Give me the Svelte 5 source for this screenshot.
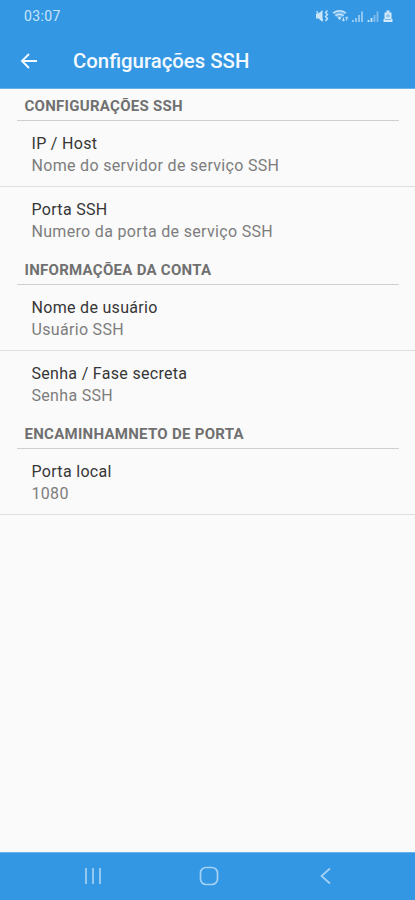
<script>
  const sections = [
    {
      title: 'CONFIGURAÇÕES SSH',
      rows: [
        { label: 'IP / Host', value: 'Nome do servidor de serviço SSH' },
        { label: 'Porta SSH', value: 'Numero da porta de serviço SSH' }
      ]
    },
    {
      title: 'INFORMAÇÕEA DA CONTA',
      rows: [
        { label: 'Nome de usuário', value: 'Usuário SSH' },
        { label: 'Senha / Fase secreta', value: 'Senha SSH' }
      ]
    },
    {
      title: 'ENCAMINHAMNETO DE PORTA',
      rows: [{ label: 'Porta local', value: '1080' }]
    }
  ];
</script>

<div class="screen">
  <div class="status">
    <span class="time">03:07</span>
    <svg class="indicators" width="80" height="16" viewBox="0 0 80 16" fill="none" aria-hidden="true">
      <path d="M1 5.500h2.500L7.500 2v12l-4-3.500H1z" fill="#c9e5f9" />
      <path d="M1.500 3l6.500 9.500" stroke="#c9e5f9" stroke-width="1.200" />
      <path d="M12.500 2.500l-2 2 2 2-2 2 2 2-2 2.500" stroke="#c9e5f9" stroke-width="1.400" />
      <path d="M18 5q6.500-4.500 13 0l-6.500 6.500z" fill="#6db5ec" />
      <path d="M18 5q6.500-4.500 13 0M20.500 7.800q4-3 8 0" stroke="#c9e5f9" stroke-width="1.500" />
      <path d="M22.500 9.700q2-1.500 4 0l-2 2.300z" fill="#c9e5f9" />
      <path d="M28.500 13V9.500M27 11.500l1.500 1.700 1.500-1.700M31.700 9v3.500M30.300 10.300l1.400-1.500 1.400 1.500" stroke="#c9e5f9" />
      <path d="M38 14v-2M41 14v-4M44 14V7M47 14V3.500" stroke="#98cbf1" stroke-width="1.800" />
      <path d="M53.500 14v-2M56.500 14v-4" stroke="#c9e5f9" stroke-width="1.800" />
      <path d="M59.500 14V7M62.500 14V3.500" stroke="#83bfee" stroke-width="1.800" />
      <path d="M69.500 4.500h2V2.500h3v2h2V11h1v3h-9v-3h1z" fill="#d2e9fa" />
      <path d="M73 5.500v4M71 8h4M70 11.500h6" stroke="#74b8ec" />
    </svg>
  </div>
  <header>
    <svg width="18" height="18" viewBox="0 0 18 18" fill="none" stroke="#f3faff" stroke-width="1.900" aria-hidden="true">
      <path d="M17 9H2.500M9 2L2 9l7 7" />
    </svg>
    <h1>Configurações SSH</h1>
  </header>

  <main>
    {#each sections as section}
      <section>
        <h2>{section.title}</h2>
        {#each section.rows as row, i}
          <div class="row" class:divided={i === 0}>
            <div class="label">{row.label}</div>
            <div class="value">{row.value}</div>
          </div>
        {/each}
      </section>
    {/each}
  </main>

  <nav>
    <svg width="18" height="18" viewBox="0 0 18 18" aria-hidden="true">
      <path d="M2 1v16M9 1v16M16 1v16" />
    </svg>
    <svg width="20" height="20" viewBox="0 0 20 20" aria-hidden="true">
      <rect x="1.500" y="1.500" width="17" height="17" rx="5.500" />
    </svg>
    <svg width="18" height="18" viewBox="0 0 18 18" aria-hidden="true">
      <path d="M14 1.500L5.500 9l8.500 7.500" />
    </svg>
  </nav>
</div>

<style>
  :global(body) { margin: 0; background: #fafafa; }
  .screen {
    box-sizing: border-box;
    width: 415px;
    height: 900px;
    display: flex;
    flex-direction: column;
    background: #fafafa;
    font-family: Roboto, "Liberation Sans", sans-serif;
    overflow: hidden;
  }
  .status {
    height: 33px;
    flex: none;
    box-sizing: border-box;
    padding: 0 20px 2px 24px;
    display: flex;
    align-items: center;
    justify-content: space-between;
    background: #3397e3;
  }
  .time { color: #c9e5f9; font-size: 14px; letter-spacing: 0.4px; }
  .indicators { display: block; }
  header {
    height: 56px;
    flex: none;
    box-sizing: border-box;
    padding: 0 20px;
    display: flex;
    align-items: center;
    gap: 35px;
    background: #3397e3;
    border-bottom: 1px solid #67b1ea;
  }
  h1 { margin: 0; color: #f3faff; font-size: 20.35px; font-weight: 500; line-height: 24px; }
  main { flex: 1; }
  h2 {
    margin: 0 16px 0 17px;
    height: 32px;
    box-sizing: border-box;
    padding: 7px 0 0 7.500px;
    border-bottom: 1px solid #cfcfcf;
    color: #707070;
    font-size: 15px;
    line-height: 20px;
    font-weight: 700;
    letter-spacing: 0.28px;
  }
  section + section h2 { height: 33px; padding-top: 8px; }
  .row {
    height: 65px;
    box-sizing: border-box;
    padding: 12px 31.500px 0;
  }
  .divided { height: 66px; border-bottom: 1px solid #dfdfdf; }
  .label { color: #363636; font-size: 16px; line-height: 22px; letter-spacing: 0.31px; }
  .value { color: #7d7d7d; font-size: 16px; line-height: 22px; letter-spacing: 0.32px; }
  nav {
    height: 48px;
    flex: none;
    box-sizing: border-box;
    padding: 0 81px 2px 84px;
    display: flex;
    align-items: center;
    justify-content: space-between;
    background: #3397e3;
    border-top: 1px solid #67b1ea;
  }
  nav svg { fill: none; stroke: #a5d2f4; stroke-width: 1.7; }
</style>
